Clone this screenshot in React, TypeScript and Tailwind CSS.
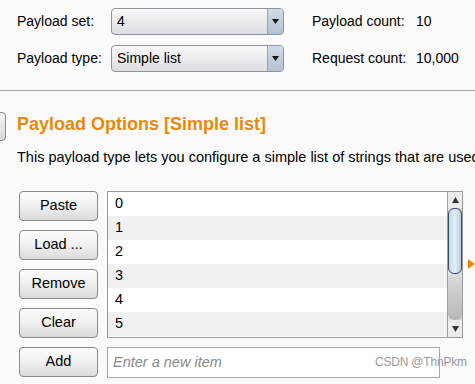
import React from "react";

const font = { fontFamily: '"Liberation Sans", Arial, sans-serif' };

function Dropdown({ value }: { value: string }) {
  return (
    <div className="flex h-[27px] w-[173px] rounded-[4px] border border-[#8e939c] bg-gradient-to-b from-[#fafafa] to-[#dcdde3] overflow-hidden">
      <div className="flex-1 flex items-center pl-[5px] text-[14px] text-black">{value}</div>
      <div className="w-[16px] border-l border-[#9aa3b0] bg-gradient-to-b from-[#d3dbe6] to-[#b5c1d1] flex items-center justify-center">
        <svg width="7" height="5" viewBox="0 0 7 5"><path d="M0 0h7L3.5 5z" fill="#111" /></svg>
      </div>
    </div>
  );
}

function Btn({ label }: { label: string }) {
  return (
    <div className="h-[30px] w-[79px] rounded-[4px] border border-[#8a8a8a] bg-gradient-to-b from-[#fcfcfc] via-[#f0f0f0] to-[#dadada] flex items-center justify-center text-[14.5px] text-black">
      {label}
    </div>
  );
}

export default function App() {
  const rows = ["0", "1", "2", "3", "4", "5"];
  return (
    <div className="relative w-[475px] h-[384px] bg-[#fafafa] overflow-hidden text-black" style={font}>
      {/* top */}
      <div className="flex flex-col gap-[10px] pt-[8px] pl-[17px]">
        <div className="flex items-center h-[27px]">
          <div className="w-[94px] text-[14px]">Payload set:</div>
          <Dropdown value="4" />
          <div className="ml-[28px] w-[104px] text-[14px]">Payload count:</div>
          <div className="text-[14px]">10</div>
        </div>
        <div className="flex items-center h-[27px]">
          <div className="w-[94px] text-[14px]">Payload type:</div>
          <Dropdown value="Simple list" />
          <div className="ml-[28px] w-[104px] text-[14px]">Request count:</div>
          <div className="text-[14px]">10,000</div>
        </div>
      </div>
      <div className="mt-[18px] h-px bg-[#a8a8a8]" />
      {/* section */}
      <div className="relative mt-[21px]">
        <div className="absolute left-[-4px] top-[0px] w-[10px] h-[29px] rounded-[4px] border border-[#8a8a8a] bg-gradient-to-b from-[#f5f5f5] to-[#d8d8d8]" />
        <div className="pl-[17px] text-[18px] font-bold text-[#e8890c] leading-[22px] pt-[1px]">Payload Options [Simple list]</div>
        <div className="pl-[17px] mt-[14px] text-[14.5px] leading-[16px] whitespace-nowrap">
          This payload type lets you configure a simple list of strings that are used
        </div>
      </div>
      <div className="flex mt-[26px] pl-[19px]">
        <div className="flex flex-col gap-[9px]">
          <Btn label="Paste" />
          <Btn label="Load ..." />
          <Btn label="Remove" />
          <Btn label="Clear" />
          <Btn label="Add" />
        </div>
        <div className="ml-[9px] flex flex-col">
          <div className="flex w-[356px] h-[147px] border border-[#9a9a9a] bg-white">
            <div className="flex-1 flex flex-col">
              {rows.map((r, i) => (
                <div key={r} className={`h-[24px] flex items-center pl-[7px] text-[14.5px] ${i % 2 === 1 ? "bg-[#f1f1f1]" : "bg-white"}`}>
                  {r}
                </div>
              ))}
            </div>
            <div className="w-[15px] border-l border-[#a0a0a0] bg-gradient-to-r from-[#e6e6e6] to-[#d2d2d2] flex flex-col">
              <div className="h-[16px] flex items-center justify-center bg-[#ececec]">
                <svg width="7" height="6" viewBox="0 0 7 6"><path d="M0 6h7L3.5 0z" fill="#333" /></svg>
              </div>
              <div className="h-[66px] rounded-[6px] border border-[#3c4a5a] bg-gradient-to-r from-[#c5d8ea] via-[#e4eef7] to-[#b7cde2]" />
              <div className="flex-1 bg-gradient-to-b from-[#dcdcdc] via-[#c8c8c8] to-[#b8b8b8] rounded-b-[6px]" />
              <div className="h-[17px] flex items-center justify-center bg-[#ececec]">
                <svg width="7" height="6" viewBox="0 0 7 6"><path d="M0 0h7L3.5 6z" fill="#333" /></svg>
              </div>
            </div>
          </div>
          <div className="mt-[9px] w-[333px] h-[31px] border border-[#a8a8a8] bg-white flex items-center pl-[5px] text-[14.5px] italic text-[#8a8a8a]">
            Enter a new item
          </div>
        </div>
        <div className="ml-[5px] mt-[68px]">
          <svg width="7" height="10" viewBox="0 0 7 10"><path d="M0 0L7 5L0 10z" fill="#e8890c" /></svg>
        </div>
      </div>
      <div className="absolute left-[375px] top-[353px] text-[12px] text-[#999] tracking-[-0.2px]">CSDN @ThnPkm</div>
    </div>
  );
}
